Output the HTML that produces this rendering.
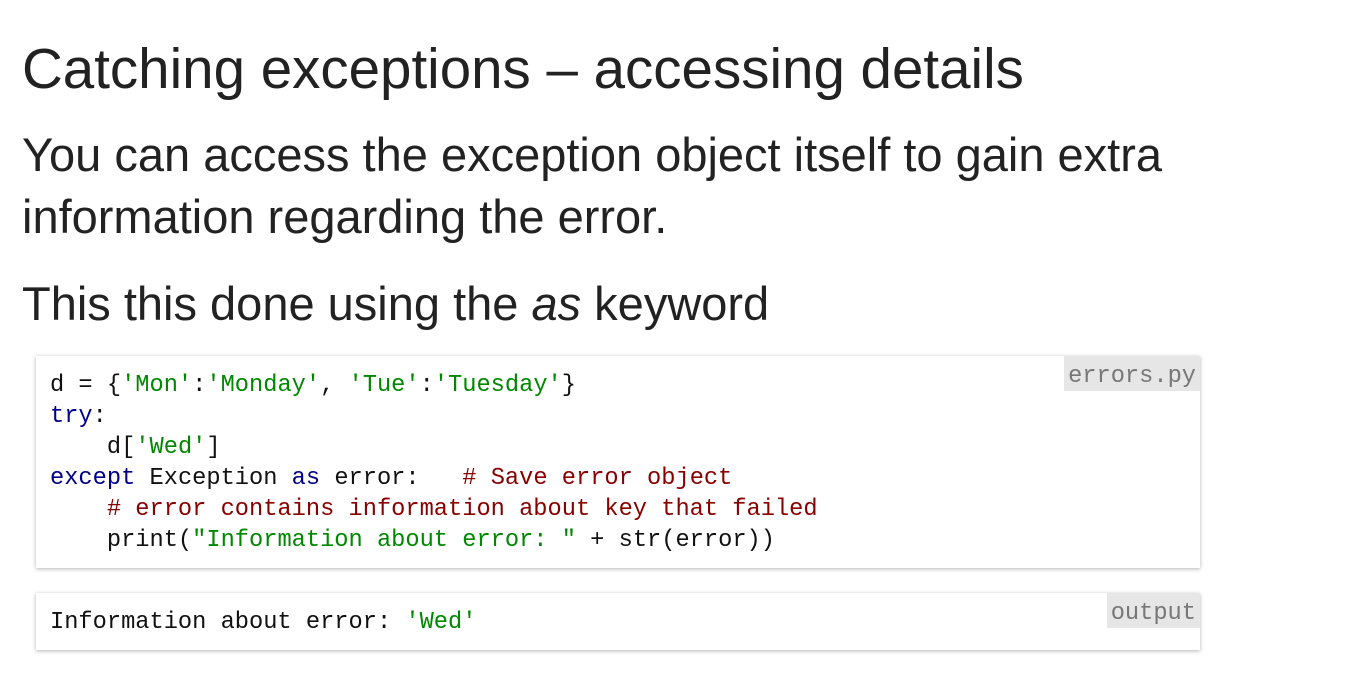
<!DOCTYPE html>
<html><head><meta charset="utf-8"><style>
body{margin:0;background:#fff;width:1348px;height:686px;overflow:hidden;font-family:"Liberation Sans",Arial,sans-serif;color:#222;position:relative}
.t{position:absolute;left:22px;white-space:nowrap;line-height:1}
.box{position:absolute;left:36px;width:1164px;background:#fff;box-shadow:0 1px 4px rgba(0,0,0,.3)}
pre{margin:0;font-family:"Liberation Mono","DejaVu Sans Mono",monospace;font-size:23.7px;line-height:31px;color:#111;position:absolute;left:14px}
.lab{position:absolute;right:0;top:0;background:#e6e6e6;color:#777;font-family:"Liberation Mono","DejaVu Sans Mono",monospace;font-size:23.7px;height:35px;line-height:42px;padding:0 4px}
.s{color:#080}.k{color:#008}.c{color:#800}
</style></head><body>
<div class="t" style="top:41px;font-size:56.5px">Catching exceptions – accessing details</div>
<div class="t" style="top:131px;font-size:47px">You can access the exception object itself to gain extra</div>
<div class="t" style="top:193px;font-size:47px">information regarding the error.</div>
<div class="t" style="top:280px;font-size:47px">This this done using the <i>as</i> keyword</div>
<div class="box" style="top:356px;height:212px">
<div class="lab">errors.py</div>
<pre style="top:14px">d = {<span class="s">'Mon'</span>:<span class="s">'Monday'</span>, <span class="s">'Tue'</span>:<span class="s">'Tuesday'</span>}
<span class="k">try</span>:
    d[<span class="s">'Wed'</span>]
<span class="k">except</span> Exception <span class="k">as</span> error:   <span class="c"># Save error object</span>
    <span class="c"># error contains information about key that failed</span>
    print(<span class="s">"Information about error: "</span> + str(error))</pre>
</div>
<div class="box" style="top:593px;height:57px">
<div class="lab">output</div>
<pre style="top:14px">Information about error: <span class="s">'Wed'</span></pre>
</div>
</body></html>
